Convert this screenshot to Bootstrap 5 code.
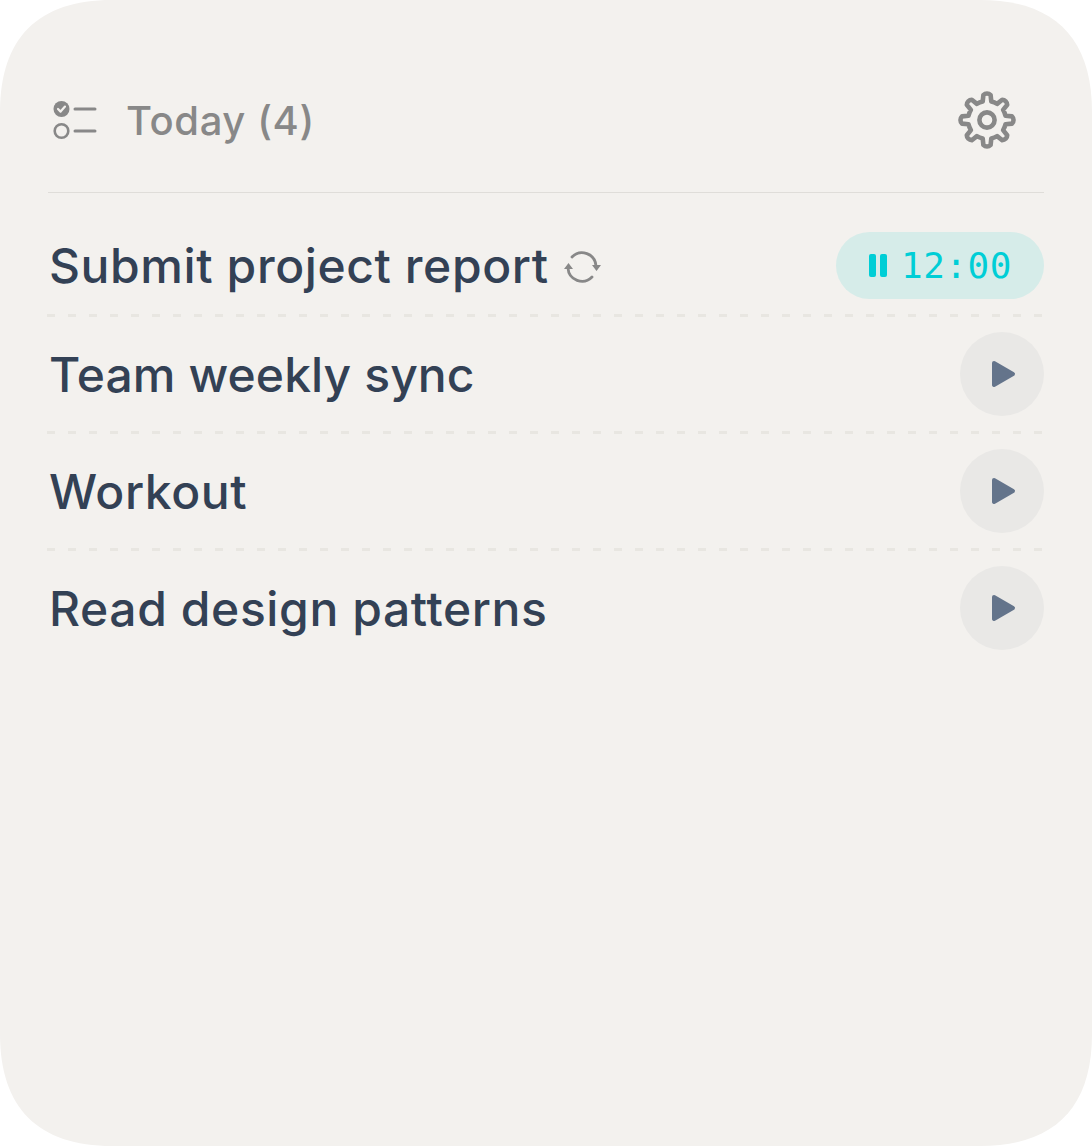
<!DOCTYPE html>
<html lang="en">
<head>
    <meta charset="UTF-8">
    <meta name="viewport" content="width=device-width, initial-scale=1.0">
    <title>Today</title>
    <link href="https://cdn.jsdelivr.net/npm/bootstrap@5.3.0/dist/css/bootstrap.min.css" rel="stylesheet">
    <style>
        body { background: #fff; font-family: "Inter", "Liberation Sans", sans-serif; font-kerning: normal; text-rendering: optimizeLegibility; }
        .panel { width: 1092px; height: 1146px; background: #f3f1ee; padding: 48px 48px 0; clip-path: path("M0 112C0 38 38 0 112 0H980C1054 0 1092 38 1092 112V1034C1092 1108 1054 1146 980 1146H112C38 1146 0 1108 0 1034Z"); }
        .panel-head { height: 145px; border-bottom: 1px solid #dfddd9; }
        .panel-title { font-size: 40px; line-height: 48px; font-weight: 450; letter-spacing: .6px; color: #888; margin-left: 28px; padding-top: 2px; }
        .gear-btn { width: 58px; height: 58px; margin-right: 28px; border: 0; background: none; padding: 0; }
        .task-list { margin-top: 23px; }
        .task-row { height: 117px; padding: 15px 0 18px 2px; margin-left: -1px; align-items: flex-start; background-image: repeating-linear-gradient(90deg, #e8e6e1 0 8px, transparent 8px 21px); background-size: 100% 3px; background-position: bottom left; background-repeat: no-repeat; }
        .task-row:first-child { height: 101px; padding-top: 16px; }
        .task-row:last-child { background-image: none; }
        .task-name { font-size: 48px; line-height: 86px; font-weight: 450; letter-spacing: .6px; color: #334155; }
        .task-name-tight { letter-spacing: .1px; }
        .task-row:first-child .task-name { line-height: 67px; }
        .sync-icon { margin-left: 15px; margin-top: 2px; }
        .timer-pill { width: 208px; height: 67px; padding-left: 33px; gap: 14px; border-radius: 34px; background: #d6ece9; color: #00ced6; }
        .timer-text { font-family: "DejaVu Sans Mono", "Liberation Mono", monospace; font-size: 36px; line-height: 67px; letter-spacing: .5px; }
        .play-btn { width: 84px; height: 84px; border-radius: 50%; border: 0; background: #e9e8e6; padding: 0; }
    </style>
</head>
<body class="m-0">
    <div class="panel">
        <div class="panel-head d-flex align-items-center">
            <svg width="50" height="48" viewBox="0 0 50 48" class="flex-shrink-0">
                <circle cx="13.5" cy="13" r="8" fill="#888"/>
                <path d="M10 13l2.600 2.600 4.400-5" fill="none" stroke="#f3f1ee" stroke-width="2.200" stroke-linecap="round" stroke-linejoin="round"/>
                <circle cx="13.500" cy="35" r="6.800" fill="none" stroke="#888" stroke-width="2.600"/>
                <path d="M27 13h20M27 35h20" fill="none" stroke="#888" stroke-width="3" stroke-linecap="round"/>
            </svg>
            <span class="panel-title flex-grow-1">Today (4)</span>
            <button class="gear-btn" type="button" aria-label="Settings">
                <svg width="58" height="58" viewBox="-29 -29 58 58">
                    <path d="M-3.600-25A5 5 0 0 1 3.600-25L4.300-18.500A19 19 0 0 1 10.100-16.100L15.200-20.200A5 5 0 0 1 20.200-15.200L16.100-10.100A19 19 0 0 1 18.500-4.300L25-3.600A5 5 0 0 1 25 3.600L18.500 4.300A19 19 0 0 1 16.100 10.100L20.200 15.200A5 5 0 0 1 15.200 20.200L10.100 16.100A19 19 0 0 1 4.300 18.500L3.600 25A5 5 0 0 1-3.600 25L-4.300 18.500A19 19 0 0 1-10.100 16.100L-15.200 20.200A5 5 0 0 1-20.200 15.200L-16.100 10.100A19 19 0 0 1-18.500 4.300L-25 3.600A5 5 0 0 1-25-3.600L-18.500-4.300A19 19 0 0 1-16.100-10.100L-20.200-15.200A5 5 0 0 1-15.200-20.200L-10.100-16.100A19 19 0 0 1-4.300-18.500Z" fill="none" stroke="#888" stroke-width="4.600" stroke-linejoin="round"/>
                    <circle r="7.600" fill="none" stroke="#888" stroke-width="4.600"/>
                </svg>
            </button>
        </div>
        <div class="task-list">
            <div class="task-row d-flex justify-content-between">
                <div class="d-flex align-items-center">
                    <span class="task-name">Submit project report</span>
                    <svg class="sync-icon" width="37" height="36" viewBox="0 0 37 36">
                        <path d="M8 8A14 14 0 0 1 32 17M28 28A14 14 0 0 1 4 19" fill="none" stroke="#888" stroke-width="2.800" stroke-linecap="round"/>
                        <path d="M28 16h9l-4.500 6zM0 20h9l-4.500-6z" fill="#888"/>
                    </svg>
                </div>
                <div class="timer-pill d-flex align-items-center">
                    <svg width="18" height="23" viewBox="0 0 18 23"><rect width="7" height="23" rx="2" fill="#00ced6"/><rect x="11" width="7" height="23" rx="2" fill="#00ced6"/></svg>
                    <span class="timer-text">12:00</span>
                </div>
            </div>
            <div class="task-row d-flex justify-content-between">
                <span class="task-name task-name-tight">Team weekly sync</span>
                <button class="play-btn d-flex align-items-center justify-content-center" type="button" aria-label="Start">
                    <svg width="84" height="84" viewBox="0 0 84 84"><path d="M34 31L53 42L34 53Z" fill="#64748b" stroke="#64748b" stroke-width="4" stroke-linejoin="round"/></svg>
                </button>
            </div>
            <div class="task-row d-flex justify-content-between">
                <span class="task-name">Workout</span>
                <button class="play-btn d-flex align-items-center justify-content-center" type="button" aria-label="Start">
                    <svg width="84" height="84" viewBox="0 0 84 84"><path d="M34 31L53 42L34 53Z" fill="#64748b" stroke="#64748b" stroke-width="4" stroke-linejoin="round"/></svg>
                </button>
            </div>
            <div class="task-row d-flex justify-content-between">
                <span class="task-name">Read design patterns</span>
                <button class="play-btn d-flex align-items-center justify-content-center" type="button" aria-label="Start">
                    <svg width="84" height="84" viewBox="0 0 84 84"><path d="M34 31L53 42L34 53Z" fill="#64748b" stroke="#64748b" stroke-width="4" stroke-linejoin="round"/></svg>
                </button>
            </div>
        </div>
    </div>
    <script src="https://cdn.jsdelivr.net/npm/bootstrap@5.3.0/dist/js/bootstrap.bundle.min.js"></script>
</body>
</html>
